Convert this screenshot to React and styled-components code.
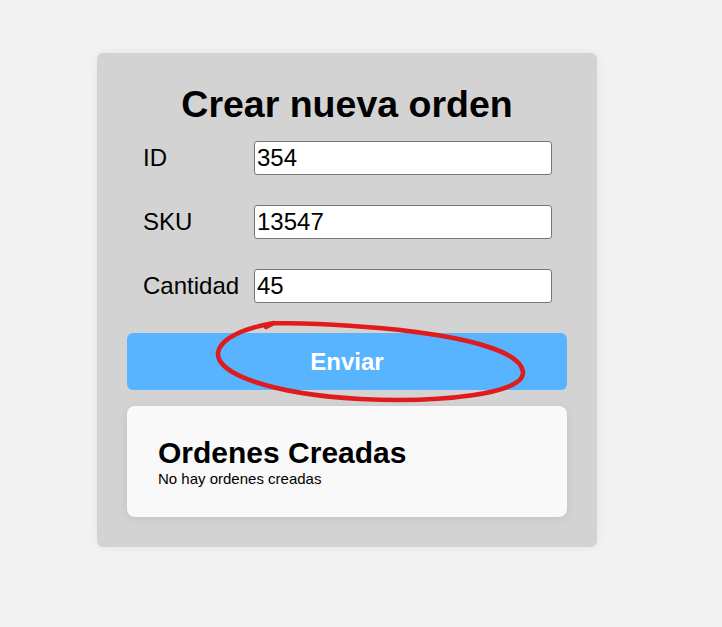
import React, { useState } from 'react'
import styled, { createGlobalStyle } from 'styled-components'

const GlobalStyle = createGlobalStyle`
  body {
    margin: 0;
    background: #f2f2f2;
    font-family: "Liberation Sans", Arial, sans-serif;
  }
`

const App = () => {
  const [id, setId] = useState('354')
  const [sku, setSku] = useState('13547')
  const [qty, setQty] = useState('45')
  const orders = []

  return (
    <Page>
      <GlobalStyle />
      <Card>
        <Title>Crear nueva orden</Title>
        <Form onSubmit={(e) => e.preventDefault()}>
          <Row>
            <Label>ID</Label>
            <Input value={id} onChange={(e) => setId(e.target.value)} />
          </Row>
          <Row>
            <Label>SKU</Label>
            <Input value={sku} onChange={(e) => setSku(e.target.value)} />
          </Row>
          <Row>
            <Label>Cantidad</Label>
            <Input value={qty} onChange={(e) => setQty(e.target.value)} />
          </Row>
          <SubmitButton type="submit">Enviar</SubmitButton>
        </Form>
        <Results>
          <ResultsTitle>Ordenes Creadas</ResultsTitle>
          {orders.length === 0 ? <Empty>No hay ordenes creadas</Empty> : null}
        </Results>
      </Card>
      <Scribble width="722" height="627" viewBox="0 0 722 627">
        <path
          d="M266 327 L274 323 C245 328 220 338 218 353 C216 374 272 394 360 399 C440 403 525 394 523 372 C521 352 470 338 400 330 C350 325 310 323 274 323"
          fill="none"
          stroke="#e01b1e"
          strokeWidth="4.5"
          strokeLinecap="round"
          strokeLinejoin="round"
        />
      </Scribble>
    </Page>
  )
}

export default App

const Page = styled.div`
  position: relative;
  min-height: 627px;
  padding: 53px 0 0 97px;
  box-sizing: border-box;
`

const Card = styled.div`
  width: 500px;
  box-sizing: border-box;
  padding: 30px;
  background: #d3d3d3;
  border-radius: 6px;
  box-shadow: 0 0 12px rgba(0, 0, 0, 0.06);
`

const Title = styled.h1`
  margin: 0 0 15px;
  font-size: 37.5px;
  font-weight: bold;
  text-align: center;
  color: #000;
`

const Form = styled.form`
  display: flex;
  flex-direction: column;
  gap: 30px;
`

const Row = styled.div`
  display: flex;
  align-items: center;
  padding-left: 16px;
`

const Label = styled.label`
  width: 111px;
  font-size: 24px;
  color: #000;
`

const Input = styled.input`
  width: 298px;
  height: 34px;
  box-sizing: border-box;
  padding: 0 2px;
  border: 1px solid #767676;
  border-radius: 3px;
  background: #fff;
  font-family: "Liberation Sans", Arial, sans-serif;
  font-size: 24px;
  color: #000;
`

const SubmitButton = styled.button`
  height: 57px;
  border: none;
  border-radius: 6px;
  background: #58b4ff;
  color: #fff;
  font-family: "Liberation Sans", Arial, sans-serif;
  font-size: 24px;
  font-weight: bold;
  cursor: pointer;
`

const Results = styled.div`
  margin-top: 16px;
  padding: 30px 31px 30px;
  background: #f9f9f9;
  border-radius: 8px;
  box-shadow: 0 2px 10px rgba(0, 0, 0, 0.08);
`

const ResultsTitle = styled.h2`
  margin: 0;
  font-size: 30px;
  font-weight: bold;
  color: #000;
`

const Empty = styled.p`
  margin: 0;
  font-size: 15px;
  color: #000;
`

const Scribble = styled.svg`
  position: absolute;
  top: 0;
  left: 0;
  pointer-events: none;
`
